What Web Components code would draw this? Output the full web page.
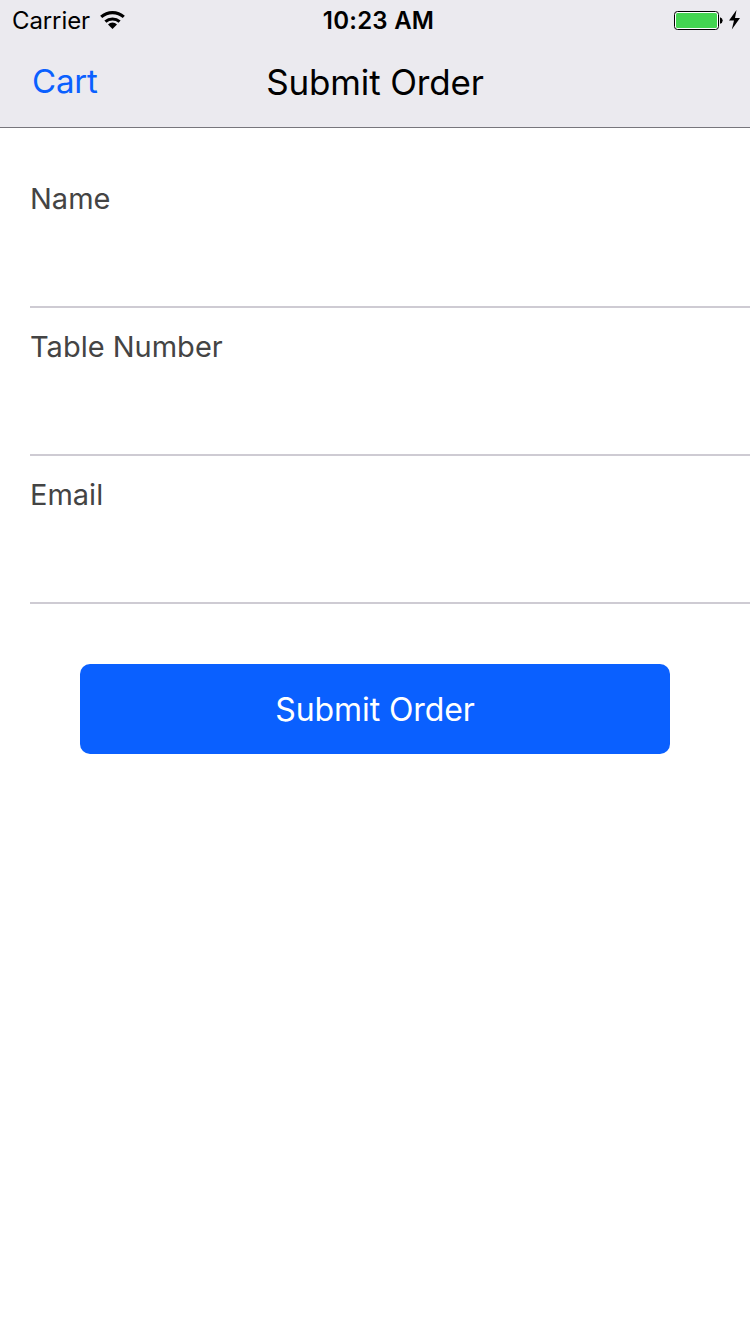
<!DOCTYPE html>
<html lang="en"><head><meta charset="utf-8"><title>Submit Order</title>
<style>html,body{margin:0;background:#fff}body{font-family:Inter,"Liberation Sans",sans-serif}</style></head>
<body><order-screen></order-screen>
<script>
const define=(name,html)=>customElements.define(name,class extends HTMLElement{
  constructor(){super();const t=document.createElement('template');t.innerHTML=html;
  this.attachShadow({mode:'open'}).append(t.content.cloneNode(true));}});
define('status-bar',`<style>
:host{display:grid;grid-template-columns:1fr auto 1fr;height:42px;align-items:center;color:#000;font-size:24px;line-height:40px;box-sizing:border-box;padding:0 9px 0 12px}
.left{display:flex;align-items:center;gap:10px}.right{display:flex;align-items:center;justify-content:flex-end}
.carrier{letter-spacing:-.1px}
.time{font-weight:600;font-size:24px;letter-spacing:.25px;padding-left:4px}
svg{display:block}</style>
<div class="left"><span class="carrier">Carrier</span><svg width="25" height="20" viewBox="0 0 25 20"><g fill="none" stroke="#000" stroke-width="3.1"><path d="M1.2 5.900a17 17 0 0 1 22.600 0"/><path d="M5.400 10.700a10.700 10.700 0 0 1 14.200 0"/></g><path d="M12.500 18l-4.500-4.500a6.300 6.300 0 0 1 9 0z"/></svg></div>
<span class="time">10:23 AM</span>
<div class="right"><svg width="67" height="22" viewBox="0 0 67 22"><rect x=".5" y="1.5" width="44" height="18" rx="3" fill="#fff" stroke="#000"/><rect x="2" y="3" width="41" height="15" rx="1.5" fill="#43d551"/><path d="M46 7.200q2.700.8 2.700 3.300t-2.700 3.300z"/><path d="M62.500 0L55 10.500h5l-2.200 9L66 8h-5z"/></svg></div>`);
define('nav-bar',`<style>
:host{display:grid;grid-template-columns:1fr auto 1fr;height:85px;box-sizing:border-box;padding:17px 32px 0}
.back{color:#0a60ff;font-size:33px;line-height:44px;letter-spacing:-.15px}.title{font-size:35px;line-height:47px;color:#000;letter-spacing:-.15px}</style>
<span class="back"><slot name="back"></slot></span><span class="title"><slot></slot></span>`);
define('form-field',`<style>
:host{display:block;height:148px;box-sizing:border-box;border-bottom:2px solid #cecbd3;margin-left:30px;padding-top:19px;font-size:29px;line-height:40px;color:#444}</style>
<label><slot></slot></label>`);
define('app-button',`<style>
:host{display:block;margin:60px 80px 0}
button{display:block;width:100%;height:90px;border:0;border-radius:10px;background:#0a60ff;color:#fff;font:380 32px/90px Inter,"Liberation Sans",sans-serif;padding:1px 0 0;letter-spacing:-.1px}</style>
<button><slot></slot></button>`);
define('order-screen',`<style>
:host{display:flex;flex-direction:column;height:1334px;overflow:hidden}
header{background:#ebeaef;border-bottom:1px solid #77767c;height:127px}
main{padding-top:32px}</style>
<header><status-bar></status-bar><nav-bar><span slot="back">Cart</span>Submit Order</nav-bar></header>
<main><form-field>Name</form-field><form-field>Table Number</form-field><form-field>Email</form-field><app-button>Submit Order</app-button></main>`);
</script></body></html>
